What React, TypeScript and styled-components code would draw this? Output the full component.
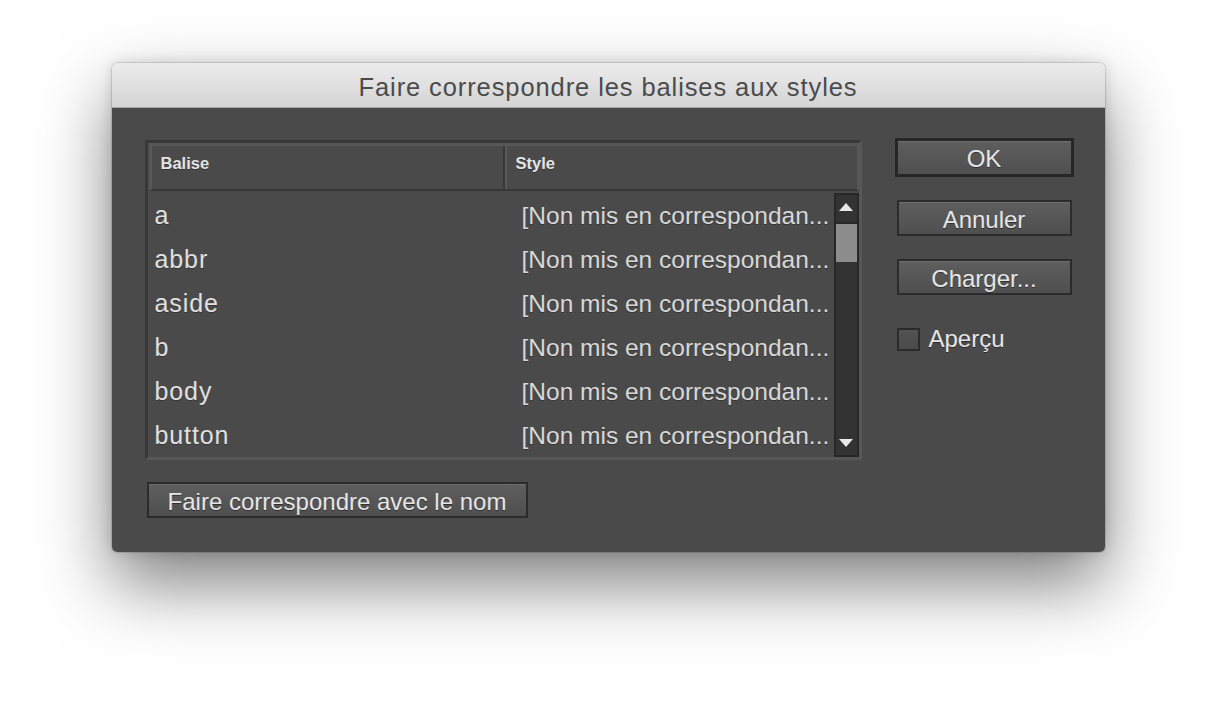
import React from "react";
import styled, { createGlobalStyle } from "styled-components";

const Global = createGlobalStyle`
  html, body { margin: 0; padding: 0; background: #ffffff; }
  body { font-family: "Liberation Sans", Arial, sans-serif; }
  * { box-sizing: border-box; }
`;

const Page = styled.div`
  width: 1216px;
  height: 712px;
  padding-top: 63px;
  display: flex;
  justify-content: center;
  align-items: flex-start;
  background: #ffffff;
`;

const Window = styled.div`
  width: 993px;
  height: 489px;
  border-radius: 6px 6px 5px 5px;
  overflow: hidden;
  display: flex;
  flex-direction: column;
  box-shadow: 0 32px 70px rgba(0, 0, 0, 0.5), 0 0 0 1px rgba(0, 0, 0, 0.12), 0 0 14px rgba(0, 0, 0, 0.14);
`;

const TitleBar = styled.div`
  height: 45px;
  flex: none;
  background: linear-gradient(#ececec, #d4d4d4);
  border-bottom: 1px solid #a9a9a9;
  display: flex;
  align-items: center;
  justify-content: center;
  color: #4b4b4b;
  font-size: 25.5px;
  letter-spacing: 0.9px;
  padding-top: 4px;
`;

const Body = styled.div`
  flex: 1;
  background: #4a4a4a;
  padding: 32px 31px 0 33px;
  display: flex;
  gap: 33px;
  align-items: flex-start;
`;

const LeftCol = styled.div`
  display: flex;
  flex-direction: column;
  align-items: flex-start;
  gap: 22px;
`;

const Table = styled.div`
  width: 717px;
  height: 320px;
  border: 3px solid;
  border-color: #383838 #575757 #575757 #383838;
  display: flex;
  flex-direction: column;
`;

const Header = styled.div`
  height: 48px;
  flex: none;
  display: flex;
  border-top: 3px solid #575757;
  border-left: 3px solid #575757;
  border-right: 2px solid #575757;
  border-bottom: 2px solid #383838;
  margin: 0 0 0 1px;
`;

const HeadCell = styled.div<{ $w?: number; $pad: number }>`
  ${(p) => (p.$w ? `width: ${p.$w}px; flex: none;` : "flex: 1;")}
  padding-left: ${(p) => p.$pad}px;
  padding-top: 8px;
  font-size: 16.5px;
  font-weight: bold;
  color: #e4e4e4;
  text-shadow: 0 1px 0 rgba(0, 0, 0, 0.35);
  ${(p) => (p.$w ? "border-right: 2px solid #383838; box-shadow: 2px 0 0 #585858;" : "")}
`;

const ListArea = styled.div`
  flex: 1;
  display: flex;
  padding-top: 2px;
`;

const Rows = styled.div`
  flex: 1;
  display: flex;
  flex-direction: column;
`;

const Row = styled.div`
  height: 44px;
  display: flex;
  align-items: center;
  padding-top: 1px;
  color: #e0e0e0;
  text-shadow: 0 1px 0 rgba(0, 0, 0, 0.3);
`;

const TagCell = styled.div`
  width: 374px;
  padding-left: 7px;
  flex: none;
  font-size: 25px;
  letter-spacing: 0.9px;
`;

const StyleCell = styled.div`
  flex: 1;
  white-space: nowrap;
  overflow: hidden;
  font-size: 24.5px;
  color: #d8d8d8;
`;

const Scrollbar = styled.div`
  width: 25px;
  flex: none;
  background: #333333;
  border: 2px solid #272727;
  display: flex;
  flex-direction: column;
`;

const ArrowBox = styled.div<{ $down?: boolean }>`
  height: 29px;
  flex: none;
  display: flex;
  justify-content: center;
  align-items: ${(p) => (p.$down ? "flex-end" : "flex-start")};
  padding: ${(p) => (p.$down ? "0 0 7px" : "7px 0 0")};
  ${(p) => (p.$down ? "" : "border-bottom: 2px solid #272727;")}
`;

const Thumb = styled.div`
  height: 38px;
  flex: none;
  background: #8d8d8d;
`;

const Track = styled.div`
  flex: 1;
`;

const Btn = styled.button<{ $w: number; $default?: boolean }>`
  width: ${(p) => p.$w}px;
  height: ${(p) => (p.$default ? 39 : 36)}px;
  margin: ${(p) => (p.$default ? "0" : "0 2px")};
  border: ${(p) => (p.$default ? "3px solid #262626" : "2px solid #2b2b2b")};
  background: linear-gradient(#5e5e5e, #4f4f4f);
  box-shadow: inset 0 1px 0 rgba(255, 255, 255, 0.1);
  color: #e6e6e6;
  font-family: "Liberation Sans", Arial, sans-serif;
  font-size: 24px;
  padding: 3px 0 0;
  text-shadow: 0 1px 0 rgba(0, 0, 0, 0.45);
  display: flex;
  align-items: center;
  justify-content: center;
`;

const WideBtn = styled(Btn)`
  margin: 0 0 0 2px;
`;

const RightCol = styled.div`
  display: flex;
  flex-direction: column;
  align-items: flex-start;
  gap: 23px;
  margin-top: -2px;
`;

const CheckRow = styled.label`
  display: flex;
  align-items: center;
  gap: 9px;
  margin: 7px 0 0 2px;
  color: #e6e6e6;
  font-size: 24px;
  text-shadow: 0 1px 0 rgba(0, 0, 0, 0.45);
`;

const Box = styled.span`
  width: 23px;
  height: 23px;
  border: 2px solid #2b2b2b;
  background: linear-gradient(#535353, #4a4a4a);
  display: inline-block;
`;

const Arrow = ({ down }: { down?: boolean }) => (
  <svg width="14" height="10" viewBox="0 0 14 10">
    <polygon points={down ? "0,1 14,1 7,9" : "0,9 14,9 7,1"} fill="#e8e8e8" />
  </svg>
);

const tags = ["a", "abbr", "aside", "b", "body", "button"];

export default function App() {
  return (
    <>
      <Global />
      <Page>
        <Window>
          <TitleBar>Faire correspondre les balises aux styles</TitleBar>
          <Body>
            <LeftCol>
              <Table>
                <Header>
                  <HeadCell $w={353} $pad={9}>Balise</HeadCell>
                  <HeadCell $pad={11}>Style</HeadCell>
                </Header>
                <ListArea>
                  <Rows>
                    {tags.map((t) => (
                      <Row key={t}>
                        <TagCell>{t}</TagCell>
                        <StyleCell>[Non mis en correspondan...</StyleCell>
                      </Row>
                    ))}
                  </Rows>
                  <Scrollbar>
                    <ArrowBox>
                      <Arrow />
                    </ArrowBox>
                    <Thumb />
                    <Track />
                    <ArrowBox $down>
                      <Arrow down />
                    </ArrowBox>
                  </Scrollbar>
                </ListArea>
              </Table>
              <WideBtn $w={381}>Faire correspondre avec le nom</WideBtn>
            </LeftCol>
            <RightCol>
              <Btn $w={179} $default>OK</Btn>
              <Btn $w={175}>Annuler</Btn>
              <Btn $w={175}>Charger...</Btn>
              <CheckRow>
                <Box />
                Aperçu
              </CheckRow>
            </RightCol>
          </Body>
        </Window>
      </Page>
    </>
  );
}
